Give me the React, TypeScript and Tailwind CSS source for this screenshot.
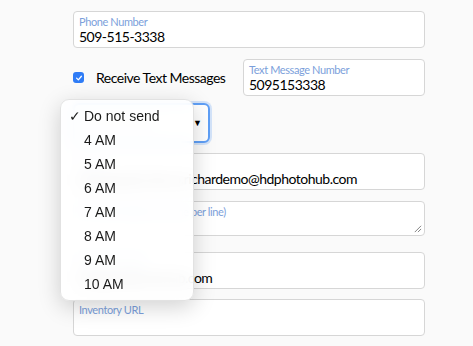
const FONT = { fontFamily: "Lato, 'Open Sans', sans-serif" }
const MENU_FONT = { fontFamily: "'Liberation Sans', Arial, sans-serif" }

function Field({ label, value, className = "" }: { label?: string; value?: string; className?: string }) {
  return (
    <div className={`h-[37px] rounded-[4px] border border-[#d6d6d6] bg-white px-[5px] pt-[3px] ${className}`}>
      {label && <div className="text-[11px] leading-[13px] tracking-[-0.4px] text-[#7c9fdb]">{label}</div>}
      {value && <div className="text-[14px] leading-[18px] tracking-[-0.5px] text-black">{value}</div>}
    </div>
  )
}

const hours = ["4 AM", "5 AM", "6 AM", "7 AM", "8 AM", "9 AM", "10 AM"]

export default function App() {
  return (
    <div className="h-[346px] w-[473px] overflow-hidden bg-[#fafafa]" style={FONT}>
      <div className="ml-[73px] w-[352px]">
        <Field className="-mt-[37px]" />
        <Field className="mt-[11px]" label="Phone Number" value="509-515-3338" />

        <div className="mt-[11px] flex items-center">
          <div className="flex w-[170px] items-center">
            <span className="flex h-[11px] w-[11px] items-center justify-center rounded-[3px] bg-[#2f7cf6]">
              <svg viewBox="0 0 10 10" className="h-[8px] w-[8px]">
                <path d="M2 5.2 L4.2 7.3 L8 2.8" fill="none" stroke="white" strokeWidth="1.6" strokeLinecap="round" strokeLinejoin="round" />
              </svg>
            </span>
            <span className="ml-[12px] text-[14px] tracking-[-0.5px] text-black">Receive Text Messages</span>
          </div>
          <Field className="w-[182px]" label="Text Message Number" value="5095153338" />
        </div>

        <div className="relative mt-[7px]">
          <div className="flex h-[40px] w-[137px] items-center justify-between rounded-[6px] border-2 border-[#5f9ff6] bg-white pl-[8px] pr-[6px] shadow-[0_0_0_2px_rgba(95,159,246,0.25)]">
            <span className="text-[13px] text-[#b8b8b8]">Do not send</span>
            <span className="text-[9px] text-black">▼</span>
          </div>

          {/* open select menu */}
          <div
            className="absolute left-[-13px] top-[-4px] z-10 w-[134px] rounded-[9px] border border-[#e2e2e2] bg-white/90 py-[4px] shadow-[0_6px_22px_rgba(0,0,0,0.18)] backdrop-blur-sm"
            style={MENU_FONT}
          >
            <div className="flex h-[24px] items-center text-[14px] text-[#1a1a1a]">
              <span className="w-[23px] pl-[8px] text-[14px]">✓</span>
              <span>Do not send</span>
            </div>
            {hours.map((h) => (
              <div key={h} className="flex h-[24px] items-center pl-[23px] text-[14px] text-[#1a1a1a]">
                {h}
              </div>
            ))}
          </div>
        </div>

        <Field className="mt-[10px]" label="Email" value="photograph.demo.richardemo@hdphotohub.com" />

        <div className="relative mt-[11px] h-[35px] rounded-[4px] border border-[#d6d6d6] bg-white px-[5px] pt-[3px]">
          <div className="text-[11px] leading-[13px] tracking-[-0.4px] text-[#7c9fdb]">CC Email Addresses (one per line)</div>
          <svg viewBox="0 0 10 10" className="absolute bottom-[2px] right-[2px] h-[9px] w-[9px]">
            <path d="M9 2 L2 9 M9 5.5 L5.5 9" stroke="#777" strokeWidth="1" />
          </svg>
        </div>

        <Field className="mt-[16px]" label="Reply-To Email" value="help@hdphotohub.com" />
        <Field className="mt-[10px]" label="Inventory URL" />
      </div>
    </div>
  )
}
